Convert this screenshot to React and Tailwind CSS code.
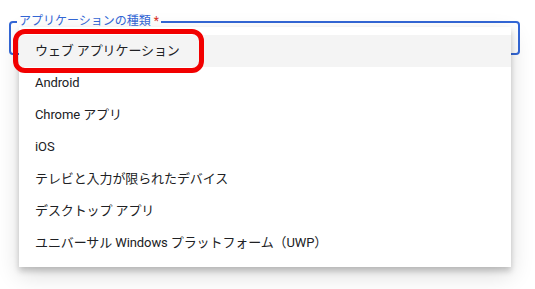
const options = [
  'ウェブ アプリケーション',
  'Android',
  'Chrome アプリ',
  'iOS',
  'テレビと入力が限られたデバイス',
  'デスクトップ アプリ',
  'ユニバーサル Windows プラットフォーム（UWP）',
];

export default function App() {
  return (
    <div className="relative w-[535px] h-[289px] bg-white font-['Roboto','Noto_Sans_CJK_JP',sans-serif] overflow-hidden">
      {/* outlined select field */}
      <div className="relative ml-[9px] mt-[21px] w-[511px] h-[34px] border-2 border-[#3367d6] rounded-[4px]">
        <span className="absolute left-[6px] -top-[10px] px-[2px] bg-white text-[12px] leading-[16px] text-[#3367d6]">
          アプリケーションの種類 <span className="text-[#d93025]">*</span>
        </span>
      </div>

      {/* dropdown menu */}
      <ul className="absolute left-[19px] top-[27px] w-[492px] py-[8px] bg-white shadow-[0_4px_6px_rgba(0,0,0,0.2),0_8px_22px_rgba(0,0,0,0.14)]">
        {options.map((o, i) => (
          <li
            key={o}
            className={`h-[32px] flex items-center pl-[16px] text-[13px] tracking-[-0.1px] text-[#202124] ${i === 0 ? 'bg-[#f4f4f4]' : ''}`}
          >
            {o}
          </li>
        ))}
      </ul>

      {/* red highlight annotation */}
      <div className="absolute left-[13px] top-[29px] w-[191px] h-[44px] border-[5px] border-[#f20000] rounded-[12px]" />
    </div>
  );
}
